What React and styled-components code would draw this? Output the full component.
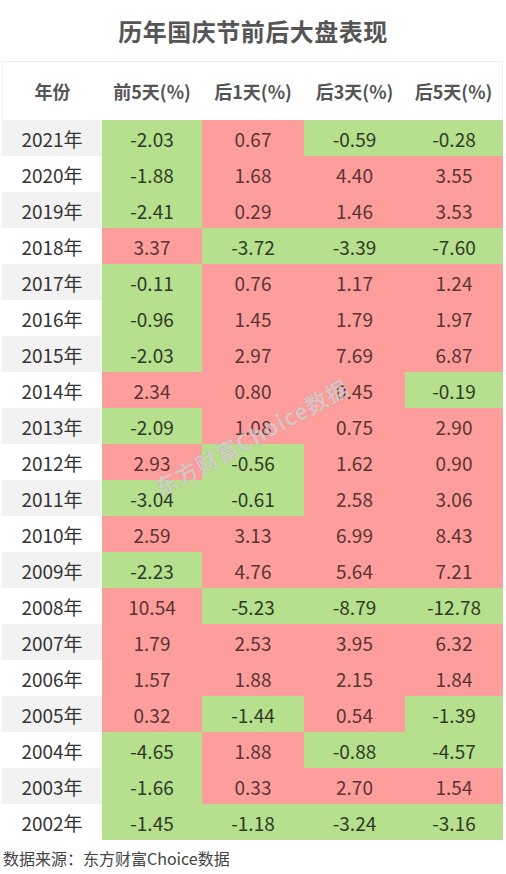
import React from "react";
import styled, { createGlobalStyle } from "styled-components";

const Global = createGlobalStyle`
  html, body { margin: 0; padding: 0; background: #fff; }
  body { font-family: "Noto Sans CJK SC", "Noto Sans", sans-serif; }
`;

const Page = styled.div`
  width: 506px;
  height: 874px;
  background: #fff;
  display: flex;
  flex-direction: column;
`;

const Title = styled.h1`
  margin: 0;
  height: 61px;
  display: flex;
  align-items: center;
  justify-content: center;
  font-size: 24px;
  font-weight: 700;
  color: #555;
  letter-spacing: 0.5px;
`;

const Table = styled.div`
  position: relative;
  margin: 0 3px 0 2px;
  display: grid;
  grid-template-columns: 100px 100px 102px 101px 98px;
  grid-template-rows: 58px;
  grid-auto-rows: 36px;
  border-top: 1px solid #ececec;
  overflow: hidden;
`;

const Head = styled.div`
  display: flex;
  align-items: center;
  justify-content: center;
  font-size: 18px;
  font-weight: 700;
  color: #555;
  background: #fff;
  border-right: ${p => (p.$last ? "1px solid #f0f0f0" : "none")};
  border-left: ${p => (p.$first ? "1px solid #f0f0f0" : "none")};
`;

const Year = styled.div`
  display: flex;
  align-items: center;
  justify-content: center;
  font-size: 19px;
  color: #333;
  background: ${p => (p.$shade ? "#f2f2f2" : "#fff")};
`;

const Cell = styled.div`
  display: flex;
  align-items: center;
  justify-content: center;
  font-size: 19px;
  background: ${p => (p.$neg ? "#b6df8e" : "#fe9e9c")};
  color: ${p => (p.$neg ? "#2f3b25" : "#5a3434")};
`;

const Watermark = styled.div`
  position: absolute;
  left: 154px;
  top: 410px;
  transform: rotate(-28.5deg);
  transform-origin: left center;
  font-size: 22px;
  font-weight: 700;
  letter-spacing: 1px;
  white-space: nowrap;
  color: rgba(255, 255, 255, 0.55);
  text-shadow: 0 0 1px rgba(110, 90, 90, 0.5);
  pointer-events: none;
`;

const Footer = styled.div`
  padding: 6px 0 0 3px;
  font-size: 16px;
  color: #444;
`;

const headers = ["年份", "前5天(%)", "后1天(%)", "后3天(%)", "后5天(%)"];

const rows = [
  [2021, "-2.03", "0.67", "-0.59", "-0.28"],
  [2020, "-1.88", "1.68", "4.40", "3.55"],
  [2019, "-2.41", "0.29", "1.46", "3.53"],
  [2018, "3.37", "-3.72", "-3.39", "-7.60"],
  [2017, "-0.11", "0.76", "1.17", "1.24"],
  [2016, "-0.96", "1.45", "1.79", "1.97"],
  [2015, "-2.03", "2.97", "7.69", "6.87"],
  [2014, "2.34", "0.80", "0.45", "-0.19"],
  [2013, "-2.09", "1.08", "0.75", "2.90"],
  [2012, "2.93", "-0.56", "1.62", "0.90"],
  [2011, "-3.04", "-0.61", "2.58", "3.06"],
  [2010, "2.59", "3.13", "6.99", "8.43"],
  [2009, "-2.23", "4.76", "5.64", "7.21"],
  [2008, "10.54", "-5.23", "-8.79", "-12.78"],
  [2007, "1.79", "2.53", "3.95", "6.32"],
  [2006, "1.57", "1.88", "2.15", "1.84"],
  [2005, "0.32", "-1.44", "0.54", "-1.39"],
  [2004, "-4.65", "1.88", "-0.88", "-4.57"],
  [2003, "-1.66", "0.33", "2.70", "1.54"],
  [2002, "-1.45", "-1.18", "-3.24", "-3.16"],
];

export default function App() {
  return (
    <Page>
      <Global />
      <Title>历年国庆节前后大盘表现</Title>
      <Table>
        {headers.map((h, i) => (
          <Head key={h} $first={i === 0} $last={i === headers.length - 1}>
            {h}
          </Head>
        ))}
        {rows.map((r, i) => (
          <React.Fragment key={r[0]}>
            <Year $shade={i % 2 === 0}>{r[0]}年</Year>
            {r.slice(1).map((v, j) => (
              <Cell key={j} $neg={v.startsWith("-")}>
                {v}
              </Cell>
            ))}
          </React.Fragment>
        ))}
        <Watermark>东方财富Choice数据</Watermark>
      </Table>
      <Footer>数据来源：东方财富Choice数据</Footer>
    </Page>
  );
}
